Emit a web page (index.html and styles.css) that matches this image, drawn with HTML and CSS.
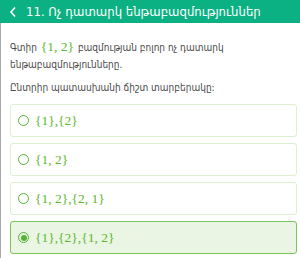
FILE: index.html
```html
<!DOCTYPE html>
<html lang="hy">
  <head>
    <meta charset="UTF-8" />
    <meta name="viewport" content="width=device-width, initial-scale=1.0" />
    <title>Ոչ դատարկ ենթաբազմություններ</title>
    <link rel="stylesheet" href="styles.css">
  </head>
  <body>
    <header class="topbar">
      <svg class="back" width="8" height="12" viewBox="0 0 8 12">
        <path d="M6 1.5 L2 6 L6 10.5" fill="none" stroke="#fff" stroke-width="1.6" />
      </svg>
      <h1>11. Ոչ դատարկ ենթաբազմություններ</h1>
    </header>
    <section class="task">
      <p class="question">
        Գտիր <span class="math">{1, 2}</span> բազմության բոլոր ոչ դատարկ
        ենթաբազմությունները.
      </p>
      <p class="hint">Ընտրիր պատասխանի ճիշտ տարբերակը:</p>
      <div class="options">
        <label class="option">
          <span class="radio"></span>
          <span class="math">{1},{2}</span>
        </label>
        <label class="option">
          <span class="radio"></span>
          <span class="math">{1, 2}</span>
        </label>
        <label class="option">
          <span class="radio"></span>
          <span class="math">{1, 2},{2, 1}</span>
        </label>
        <label class="option selected">
          <span class="radio"></span>
          <span class="math">{1},{2},{1, 2}</span>
        </label>
      </div>
    </section>
  </body>
</html>
```

FILE: styles.css
```css
* {
  margin: 0;
  padding: 0;
  box-sizing: border-box;
}

body {
  font-family: "DejaVu Sans Condensed", "DejaVu Sans", sans-serif;
  background-color: #fff;
  color: #4a4a4a;
  width: 300px;
  height: 258px;
  overflow: hidden;
}

.topbar {
  height: 23px;
  background-color: #0bb183;
  color: #fff;
  display: flex;
  align-items: center;
  padding-left: 9px;
  gap: 9px;
}

.topbar h1 {
  font-size: 13px;
  font-weight: normal;
}

.task {
  border-left: 1px solid #aaa;
  height: 235px;
  padding: 16px 3px 0 9px;
}

.question,
.hint {
  font-size: 10px;
  line-height: 17px;
}

.hint {
  margin-top: 6px;
}

.math {
  font-family: "Liberation Serif", "DejaVu Serif", serif;
  color: #5cb82e;
  font-size: 13.5px;
  line-height: 1;
}

.question .math {
  display: inline-block;
  margin: 0 1px;
}

.options {
  display: flex;
  flex-direction: column;
  gap: 6px;
  margin-top: 8px;
}

.option {
  display: flex;
  align-items: center;
  height: 33px;
  border: 1.5px solid #dcefd2;
  border-radius: 3px;
  padding-left: 7px;
  gap: 6px;
}

.radio {
  width: 11px;
  height: 11px;
  border: 1.5px solid #52b534;
  border-radius: 50%;
  display: flex;
  align-items: center;
  justify-content: center;
}

.selected {
  background-color: #eaf5e4;
  border-color: #7cc35a;
}

.selected .radio::after {
  content: "";
  width: 6px;
  height: 6px;
  border-radius: 50%;
  background-color: #52b534;
}
```
